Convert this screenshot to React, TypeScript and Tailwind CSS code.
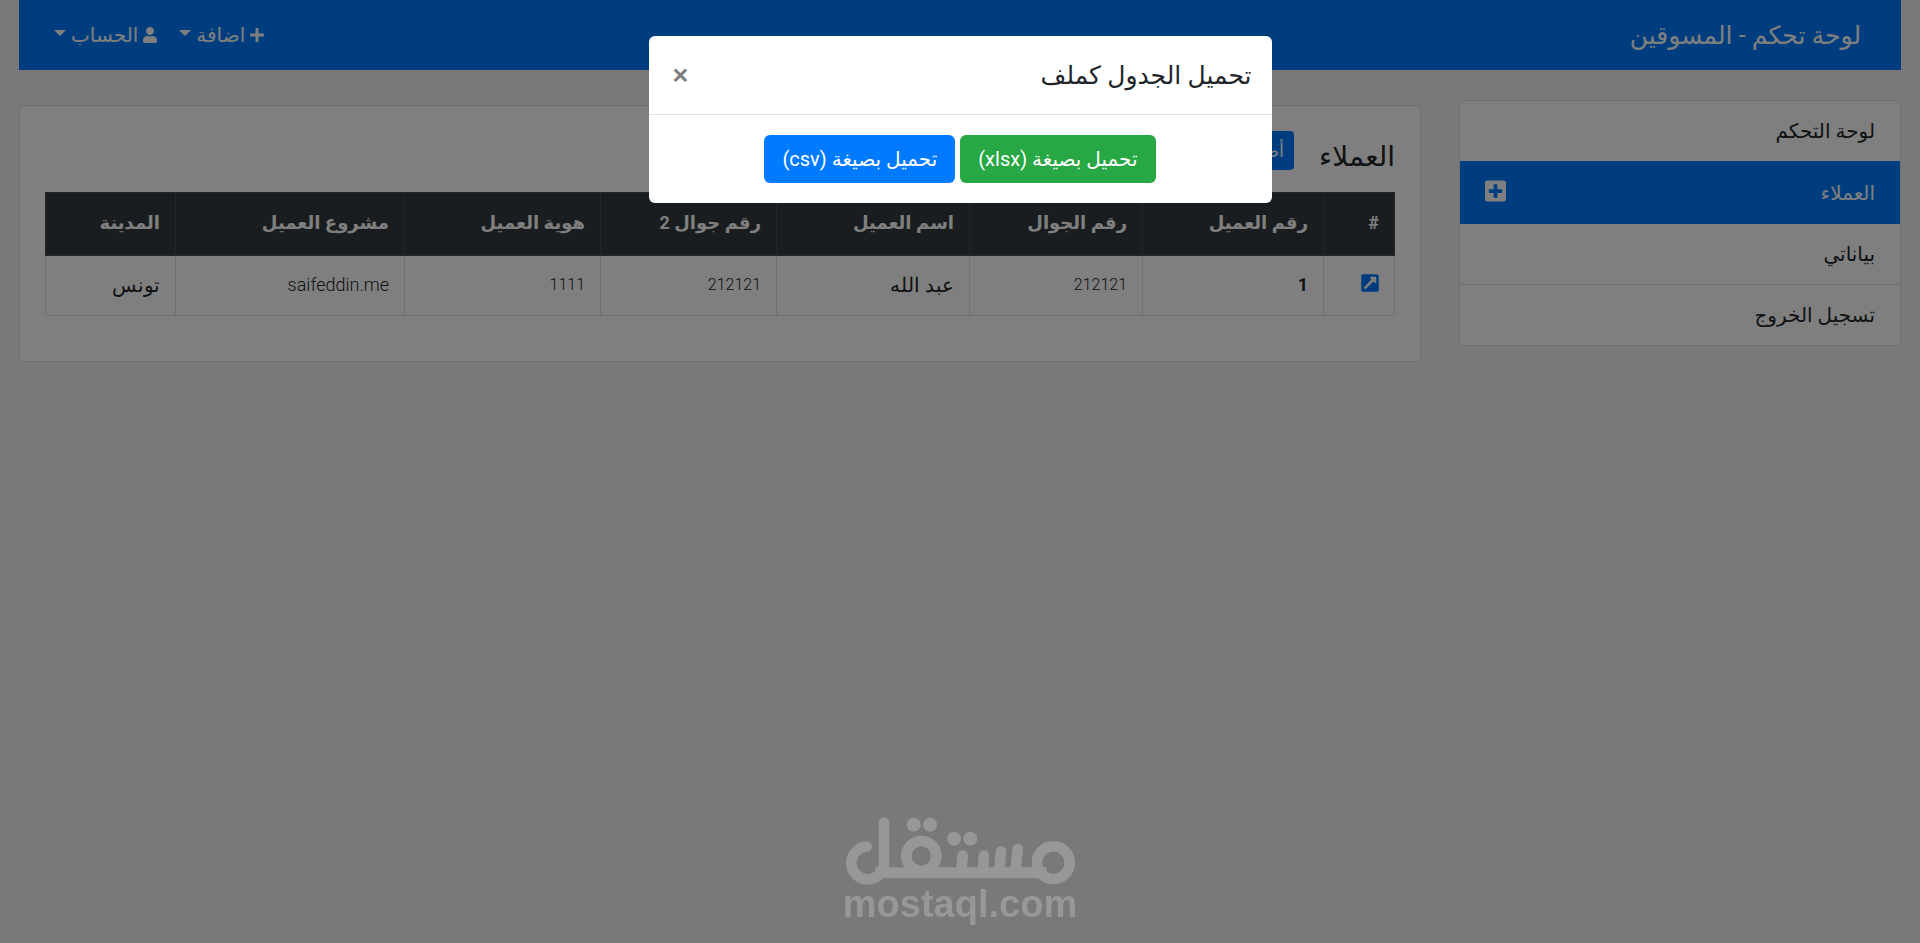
import React from 'react';
import { FaExternalLinkSquareAlt, FaPlus, FaPlusSquare, FaUser } from 'react-icons/fa';

interface Column {
  label: string;
  width: string;
}

const columns: Column[] = [
  { label: '#', width: 'w-[71px]' },
  { label: 'رقم العميل', width: 'w-[181px]' },
  { label: 'رقم الجوال', width: 'w-[173px]' },
  { label: 'اسم العميل', width: 'w-[193px]' },
  { label: 'رقم جوال 2', width: 'w-[176px]' },
  { label: 'هوية العميل', width: 'w-[196px]' },
  { label: 'مشروع العميل', width: 'w-[229px]' },
  { label: 'المدينة', width: 'w-[130px]' },
];

const client = [
  { value: '212121', size: 'text-base' },
  { value: 'عبد الله', size: 'text-xl' },
  { value: '212121', size: 'text-base' },
  { value: '1111', size: 'text-base' },
  { value: 'saifeddin.me', size: 'text-lg' },
  { value: 'تونس', size: 'text-xl' },
];

const Caret = () => (
  <span className="mb-1 border-x-6 border-t-6 border-x-transparent border-t-white" />
);

const Navbar = () => (
  <nav className="flex h-[70px] items-center justify-between bg-[#007bff] pr-10 pl-[35px] text-white">
    <a href="#" className="text-[25px]">لوحة تحكم - المسوقين</a>
    <div className="flex items-center gap-[22px]">
      <button className="flex items-center gap-[5px]">
        <FaPlus className="h-4 w-3.5" />
        <span>اضافة</span>
        <Caret />
      </button>
      <button className="flex items-center gap-[5px]">
        <FaUser className="h-4 w-3.5" />
        <span>الحساب</span>
        <Caret />
      </button>
    </div>
  </nav>
);

const Sidebar = () => (
  <aside className="mt-[30px] w-[442px] shrink-0 self-start overflow-hidden rounded-md border border-[#dfdfdf] bg-white">
    <a href="#" className="flex h-[60px] items-center px-[25px]">لوحة التحكم</a>
    <div className="-mx-px flex h-[63px] items-center justify-between bg-[#007bff] px-[26px] text-white">
      <a href="#">العملاء</a>
      <button aria-label="اضافة عميل" className="mb-1">
        <FaPlusSquare className="h-6 w-[21px]" />
      </button>
    </div>
    <a href="#" className="flex h-[61px] items-center border-b border-[#dfdfdf] px-[25px]">بياناتي</a>
    <a href="#" className="flex h-[60px] items-center px-[25px]">تسجيل الخروج</a>
  </aside>
);

const ClientsCard = () => (
  <main className="mt-[35px] min-w-0 flex-1 self-start rounded-md border border-[#dfdfdf] bg-white px-[25px] pt-[25px] pb-[45px]">
    <div className="flex h-[61px] items-start gap-[25px]">
      <h1 className="pt-2 text-[28px] leading-9">العملاء</h1>
      <button className="h-[39px] rounded-sm bg-[#007bff] px-2.5 text-lg text-white">أضافة</button>
    </div>
    <table className="w-full table-fixed border-collapse text-right">
      <thead className="bg-[#343a40] text-lg text-white">
        <tr className="h-[62px]">
          {columns.map((col) => (
            <th key={col.label} className={`${col.width} border border-b-2 border-[#454d55] px-[15px] font-bold`}>
              {col.label}
            </th>
          ))}
        </tr>
      </thead>
      <tbody>
        <tr className="h-[61px]">
          <td className="border border-[#dee2e6] px-[15px]">
            <a href="#" aria-label="فتح" className="block pb-1 text-[#007bff]">
              <FaExternalLinkSquareAlt className="h-5 w-[18px]" />
            </a>
          </td>
          <th scope="row" className="border border-[#dee2e6] px-[15px] text-lg font-bold">1</th>
          {client.map(({ value, size }, i) => (
            <td key={i} className={`${size} border border-[#dee2e6] px-[15px] font-light`}>{value}</td>
          ))}
        </tr>
      </tbody>
    </table>
  </main>
);

const DownloadModal = () => (
  <div className="fixed inset-0 flex items-start justify-center bg-black/50 pt-9">
    <div role="dialog" aria-labelledby="download-title" className="w-full max-w-[623px] rounded-md bg-white">
      <div className="flex h-[79px] items-center justify-between border-b border-[#dee2e6] px-5">
        <h2 id="download-title" className="text-[25px]">تحميل الجدول كملف</h2>
        <button aria-label="اغلاق" className="px-1 text-[30px] font-medium text-[#7f7f7f]">×</button>
      </div>
      <div className="flex justify-center gap-[5px] p-5">
        <button className="h-12 rounded-md bg-[#28a745] px-[18px] text-white">تحميل بصيغة (xlsx)</button>
        <button className="h-12 rounded-md bg-[#007bff] px-[18px] text-white">تحميل بصيغة (csv)</button>
      </div>
    </div>
  </div>
);

const Watermark = () => (
  <div dir="ltr" className="pointer-events-none fixed inset-x-0 bottom-5 flex flex-col items-center text-[#979797]">
    <svg viewBox="75 54 690 202" className="h-[68px] w-[230px]" fill="none" stroke="currentColor" strokeWidth="32">
      <circle cx="700" cy="190" r="49" />
      <circle cx="304" cy="170" r="45" />
      <path d="M165 220H680" strokeWidth="33" />
      <path d="M593 149L587 210M543 157L538 210M492 169L489 210M428 169L424 210" strokeLinecap="round" />
      <path d="M140 142A49 49 0 1 0 192 190V70" strokeLinecap="round" />
      <g fill="currentColor" stroke="none">
        <circle cx="402" cy="118" r="21" />
        <circle cx="451" cy="118" r="21" />
        <circle cx="281" cy="76" r="21" />
        <circle cx="330" cy="76" r="21" />
      </g>
    </svg>
    <span className="font-['Liberation_Sans',sans-serif] text-[38px] leading-[38px] font-bold">mostaql.com</span>
  </div>
);

export default function App() {
  return (
    <div dir="rtl" className="min-h-screen bg-[#f2f2f2] px-[19px] font-['Roboto','DejaVu_Sans',sans-serif] text-xl text-[#212529]">
      <Navbar />
      <div className="flex gap-[38px]">
        <Sidebar />
        <ClientsCard />
      </div>
      <DownloadModal />
      <Watermark />
    </div>
  );
}
